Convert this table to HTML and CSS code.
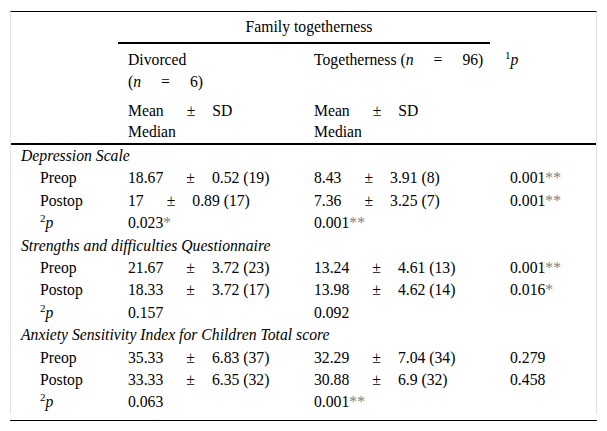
FILE: index.html
```html
<!DOCTYPE html>
<html lang="en">
<head>
<meta charset="utf-8">
<title>Family togetherness</title>
<link rel="stylesheet" href="styles.css">
</head>
<body>
<div class="frame">
<table class="tbl">
<colgroup><col class="c1"><col class="c2"><col class="c3"><col class="c4"></colgroup>
<thead>
<tr class="h1"><th></th><th colspan="2" class="group">Family togetherness</th><th></th></tr>
<tr class="h2"><th></th><th>Divorced<br>(<i>n</i><span class="eq">=</span>6)</th><th>Togetherness (<i>n</i><span class="eq">=</span>96)</th><th class="pcol"><sup class="sup">1</sup><i>p</i></th></tr>
<tr class="h3"><th></th><th>Mean<span class="pm">±</span>SD<br>Median</th><th>Mean<span class="pm">±</span>SD<br>Median</th><th></th></tr>
</thead>
<tbody>
<tr class="sec"><td colspan="4">Depression Scale</td></tr>
<tr><td class="lab">Preop</td><td>18.67<span class="pm">±</span>0.52 (19)</td><td>8.43<span class="pm">±</span>3.91 (8)</td><td class="p">0.001<span class="ast">**</span></td></tr>
<tr><td class="lab">Postop</td><td>17<span class="pm">±</span>0.89 (17)</td><td>7.36<span class="pm">±</span>3.25 (7)</td><td class="p">0.001<span class="ast">**</span></td></tr>
<tr><td class="lab"><sup class="sup">2</sup><i>p</i></td><td>0.023<span class="ast">*</span></td><td>0.001<span class="ast">**</span></td><td class="p"></td></tr>
<tr class="sec"><td colspan="4">Strengths and difficulties Questionnaire</td></tr>
<tr><td class="lab">Preop</td><td>21.67<span class="pm">±</span>3.72 (23)</td><td>13.24<span class="pm">±</span>4.61 (13)</td><td class="p">0.001<span class="ast">**</span></td></tr>
<tr><td class="lab">Postop</td><td>18.33<span class="pm">±</span>3.72 (17)</td><td>13.98<span class="pm">±</span>4.62 (14)</td><td class="p">0.016<span class="ast">*</span></td></tr>
<tr><td class="lab"><sup class="sup">2</sup><i>p</i></td><td>0.157</td><td>0.092</td><td class="p"></td></tr>
<tr class="sec"><td colspan="4">Anxiety Sensitivity Index for Children Total score</td></tr>
<tr><td class="lab">Preop</td><td>35.33<span class="pm">±</span>6.83 (37)</td><td>32.29<span class="pm">±</span>7.04 (34)</td><td class="p">0.279</td></tr>
<tr><td class="lab">Postop</td><td>33.33<span class="pm">±</span>6.35 (32)</td><td>30.88<span class="pm">±</span>6.9 (32)</td><td class="p">0.458</td></tr>
<tr><td class="lab"><sup class="sup">2</sup><i>p</i></td><td>0.063</td><td>0.001<span class="ast">**</span></td><td class="p"></td></tr>
</tbody>
</table>
</div>
<div class="bottom-rule"></div>
</body>
</html>
```

FILE: styles.css
```css
body {
  margin: 0;
  background: #fff;
  font-family: "Liberation Serif", "Times New Roman", serif;
  font-size: 15.7px;
  color: #000;
}

.frame {
  margin: 11px 10px 0;
  border-top: 1px solid #000;
  border-left: 1px solid #e2e2e2;
  border-right: 1px solid #e2e2e2;
}

.tbl {
  width: 100%;
  border-collapse: separate;
  border-spacing: 0;
  table-layout: fixed;
}

.c1 { width: 107px; }
.c2 { width: 186px; }
.c3 { width: 186px; }
.c4 { width: 106px; }

.tbl th,
.tbl td {
  padding: 2px 0 2px 10px;
  line-height: 18.4px;
  text-align: left;
  font-weight: normal;
  vertical-align: top;
  white-space: nowrap;
}

.h1 th {
  padding-top: 6px;
  padding-bottom: 5.6px;
}

.tbl .group {
  text-align: center;
  border-bottom: 2px solid #000;
}

.h2 th {
  padding-top: 5px;
  padding-bottom: 2px;
  line-height: 22px;
}

.h3 th {
  padding-top: 5px;
  padding-bottom: 1px;
  line-height: 21px;
  border-bottom: 2px solid #000;
}

.tbl .pcol { padding-left: 15px; }

.sec td { font-style: italic; }

.tbl .lab { padding-left: 29px; }

.tbl .p { padding-left: 20px; }

.pm { padding: 0 17px 0 23px; }
.eq { padding: 0 20px; }

.ast { color: #808080; }

.sup {
  font-size: 11px;
  line-height: 0;
  vertical-align: 6px;
}

.bottom-rule {
  margin: 6px 10px 0;
  border-top: 1px solid #000;
}
```
